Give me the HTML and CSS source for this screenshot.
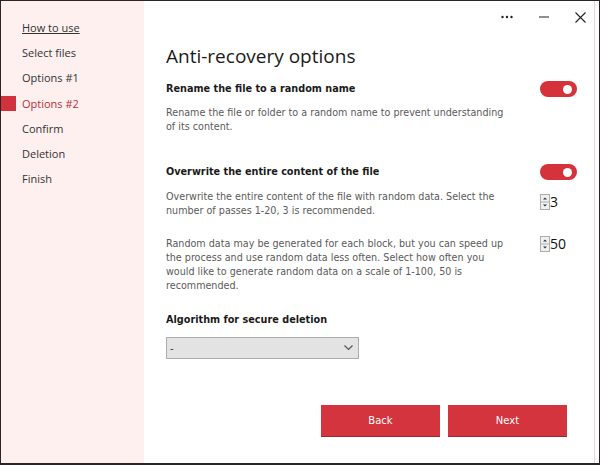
FILE: index.html
```html
<!DOCTYPE html>
<html>
<head>
<meta charset="utf-8">
<link rel="stylesheet" href="styles.css">
</head>
<body>
<div class="window">
  <nav class="sidebar">
    <a class="nav-item nav-link">How to use</a>
    <div class="nav-item">Select files</div>
    <div class="nav-item">Options #1</div>
    <div class="nav-item active">Options #2</div>
    <div class="nav-item">Confirm</div>
    <div class="nav-item">Deletion</div>
    <div class="nav-item">Finish</div>
  </nav>
  <main class="main">
    <div class="titlebar">
      <span class="tb-btn tb-more">
        <svg width="12" height="4" viewBox="0 0 12 4"><circle cx="1.5" cy="2" r="1.2" fill="#222"/><circle cx="6" cy="2" r="1.2" fill="#222"/><circle cx="10.5" cy="2" r="1.2" fill="#222"/></svg>
      </span>
      <span class="tb-btn tb-min">
        <svg width="10" height="2" viewBox="0 0 10 2"><rect x="0" y="0.5" width="10" height="1" fill="#222"/></svg>
      </span>
      <span class="tb-btn tb-close">
        <svg width="11" height="11" viewBox="0 0 11 11"><path d="M0.5 0.5 L10.5 10.5 M10.5 0.5 L0.5 10.5" stroke="#222" stroke-width="1.1"/></svg>
      </span>
    </div>
    <h1 class="title">Anti-recovery options</h1>

    <div class="option-row first">
      <div class="opt-head">Rename the file to a random name</div>
      <span class="toggle"><span class="knob"></span></span>
    </div>
    <p class="desc desc-1">Rename the file or folder to a random name to prevent understanding of its content.</p>

    <div class="option-row second">
      <div class="opt-head">Overwrite the entire content of the file</div>
      <span class="toggle"><span class="knob"></span></span>
    </div>
    <div class="spin-row row-passes">
      <p class="desc">Overwrite the entire content of the file with random data. Select the number of passes 1-20, 3 is recommended.</p>
      <div class="spinner">
        <span class="spin-arrows">
          <svg width="10" height="16" viewBox="0 0 10 16"><rect x="0.5" y="0.5" width="9" height="15" fill="#f0f0f0" stroke="#adadad"/><line x1="0.5" y1="8" x2="9.5" y2="8" stroke="#adadad"/><path d="M3 5.5 L5 3.5 L7 5.5 Z" fill="#333"/><path d="M3 10.5 L5 12.5 L7 10.5 Z" fill="#333"/></svg>
        </span>
        <span class="spin-val">3</span>
      </div>
    </div>
    <div class="spin-row row-block">
      <p class="desc">Random data may be generated for each block, but you can speed up the process and use random data less often. Select how often you would like to generate random data on a scale of 1-100, 50 is recommended.</p>
      <div class="spinner">
        <span class="spin-arrows">
          <svg width="10" height="16" viewBox="0 0 10 16"><rect x="0.5" y="0.5" width="9" height="15" fill="#f0f0f0" stroke="#adadad"/><line x1="0.5" y1="8" x2="9.5" y2="8" stroke="#adadad"/><path d="M3 5.5 L5 3.5 L7 5.5 Z" fill="#333"/><path d="M3 10.5 L5 12.5 L7 10.5 Z" fill="#333"/></svg>
        </span>
        <span class="spin-val">50</span>
      </div>
    </div>

    <div class="opt-head algo-head">Algorithm for secure deletion</div>
    <div class="select">
      <span class="select-val">-</span>
      <svg width="9" height="6" viewBox="0 0 9 6"><path d="M0.5 0.5 L4.5 4.5 L8.5 0.5" fill="none" stroke="#555" stroke-width="1.2"/></svg>
    </div>

    <div class="buttons">
      <button class="btn">Back</button>
      <button class="btn">Next</button>
    </div>
  </main>
</div>
</body>
</html>
```

FILE: styles.css
```css
html, body {
  margin: 0;
  padding: 0;
  background: #ffffff;
}
body {
  width: 600px;
  height: 465px;
  overflow: hidden;
}
.window {
  box-sizing: border-box;
  width: 600px;
  height: 465px;
  border: 1px solid #2a2424;
  border-bottom-width: 2px;
  display: flex;
  background: #ffffff;
}
.sidebar {
  width: 143px;
  flex: none;
  background: #fdf0ef;
  padding-top: 19px;
  display: flex;
  flex-direction: column;
  font-family: "Open Sans", "Noto Sans", sans-serif;
  font-size: 11px;
}
.nav-item {
  height: 25.2px;
  line-height: 16px;
  padding-left: 21px;
  color: #333333;
  position: relative;
}
.nav-link {
  text-decoration: underline;
  color: #333333;
}
.nav-item.active {
  color: #b5303a;
}
.nav-item.active::before {
  content: "";
  position: absolute;
  left: 0;
  top: 0;
  width: 15px;
  height: 15px;
  background: #d2323b;
}
.main {
  flex: 1;
  padding-left: 22px;
  padding-right: 17px;
  border-right: 1px solid #dcdcdc;
  margin-right: 4px;
  font-family: "DejaVu Sans", Verdana, sans-serif;
}
.titlebar {
  display: flex;
  justify-content: flex-end;
  align-items: center;
  height: 32px;
  margin-right: -22px;
}
.tb-btn {
  display: flex;
  align-items: center;
  justify-content: center;
  width: 37px;
  height: 32px;
}
.title {
  margin: 10px 0 0 0;
  font-family: "Open Sans", "Noto Sans", sans-serif;
  font-weight: 400;
  font-size: 19px;
  line-height: 26px;
  color: #1a1a1a;
}
.option-row {
  display: flex;
  justify-content: space-between;
  align-items: center;
}
.option-row.first {
  margin-top: 12px;
}
.option-row.second {
  margin-top: 30px;
}
.opt-head {
  font-weight: 700;
  font-size: 9.7px;
  color: #1a1a1a;
  line-height: 16px;
}
.toggle {
  width: 37px;
  height: 16px;
  border-radius: 8px;
  background: #d6323b;
  position: relative;
}
.knob {
  position: absolute;
  right: 5px;
  top: 3.5px;
  width: 9px;
  height: 9px;
  border-radius: 50%;
  background: #ffffff;
}
.desc {
  margin: 0;
  font-size: 9.6px;
  line-height: 14px;
  color: #5a5a5a;
  width: 340px;
}
.desc-1 {
  margin-top: 9px;
}
.spin-row {
  display: flex;
  justify-content: space-between;
  align-items: flex-start;
}
.row-passes {
  margin-top: 10px;
}
.row-block {
  margin-top: 19px;
}
.spinner {
  display: flex;
  align-items: center;
  width: 37px;
  margin-top: -1px;
  font-family: "Open Sans", "Noto Sans", sans-serif;
}
.row-passes .spinner {
  margin-top: 4px;
}
.spin-arrows {
  display: flex;
}
.spin-val {
  font-size: 14px;
  color: #111;
  line-height: 16px;
}
.algo-head {
  margin-top: 19px;
}
.select {
  margin-top: 9px;
  box-sizing: border-box;
  width: 193px;
  height: 22px;
  background: #e3e3e3;
  border: 1px solid #adadad;
  display: flex;
  align-items: center;
  justify-content: space-between;
  padding: 0 5px 0 3px;
  font-size: 10px;
  color: #333;
}
.buttons {
  display: flex;
  justify-content: flex-end;
  gap: 8px;
  margin-top: 46px;
  margin-right: 10px;
}
.btn {
  width: 119px;
  height: 32px;
  border: none;
  background: #d3343d;
  color: #ffffff;
  font-family: "DejaVu Sans", Verdana, sans-serif;
  font-size: 10px;
  padding: 0;
  border-bottom: 1px solid #a02830;
}
```
